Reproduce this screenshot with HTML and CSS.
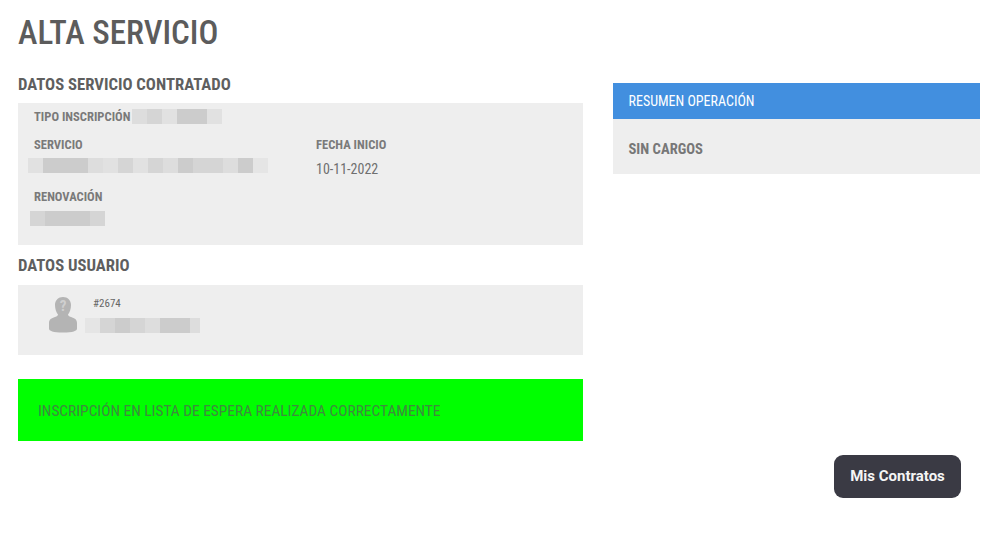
FILE: index.html
```html
<!DOCTYPE html>
<html lang="es">
  <head>
    <meta charset="UTF-8" />
    <meta name="viewport" content="width=device-width, initial-scale=1.0" />
    <title>Alta servicio</title>
    <link rel="stylesheet" href="styles.css">
  </head>
  <body>
    <h1 class="pageTitle">ALTA SERVICIO</h1>

    <div class="columns">
      <div class="leftCol">
        <h2 class="sectionTitle">DATOS SERVICIO CONTRATADO</h2>
        <div class="panel servicePanel">
          <div class="typeRow">
            <span class="label">TIPO INSCRIPCIÓN</span>
            <div class="blurred">
              <i class="s3"></i><i class="s2"></i><i class="s4"></i><i class="s1"></i><i class="s1"></i><i class="s4"></i>
            </div>
          </div>
          <div class="serviceGrid">
            <div class="serviceCell">
              <div class="label">SERVICIO</div>
              <div class="blurred blurService">
                <i class="s4"></i><i class="s1"></i><i class="s1"></i><i class="s1"></i><i class="s3"></i><i class="s4"></i><i class="s2"></i><i class="s4"></i><i class="s2"></i><i class="s3"></i><i class="s1"></i><i class="s2"></i><i class="s2"></i><i class="s3"></i><i class="s1"></i><i class="s5"></i>
              </div>
            </div>
            <div class="dateCell">
              <div class="label">FECHA INICIO</div>
              <div class="value">10-11-2022</div>
            </div>
          </div>
          <div class="label renewLabel">RENOVACIÓN</div>
          <div class="blurred blurRenew">
            <i class="s2"></i><i class="s1"></i><i class="s1"></i><i class="s1"></i><i class="s2"></i>
          </div>
        </div>

        <h2 class="sectionTitle userTitle">DATOS USUARIO</h2>
        <div class="panel userPanel">
          <svg class="avatar" viewBox="0 0 28 36" width="28" height="36">
            <path d="M14 0c4.700 0 8 3.300 8 8 0 3.800-1.300 7.500-3 9.500.2 1.300 1 1.800 3 2.500 3.500 1.100 6 2.500 6 6v5.500c0 2.500-4 4-14 4S0 34 0 31.500V26c0-3.500 2.500-4.900 6-6 2-.7 2.800-1.200 3-2.500C7.300 15.500 6 11.800 6 8c0-4.700 3.300-8 8-8z" fill="#b4b4b4"/>
            <text x="14" y="14" text-anchor="middle" class="avatarMark">?</text>
          </svg>
          <div class="userInfo">
            <div class="userId">#2674</div>
            <div class="blurred">
              <i class="s5"></i><i class="s2"></i><i class="s1"></i><i class="s2"></i><i class="s3"></i><i class="s1"></i><i class="s1"></i><i class="s3 narrow"></i>
            </div>
          </div>
        </div>

        <div class="successMsg">INSCRIPCIÓN EN LISTA DE ESPERA REALIZADA CORRECTAMENTE</div>
      </div>

      <div class="rightCol">
        <div class="summaryHead">RESUMEN OPERACIÓN</div>
        <div class="summaryBody">SIN CARGOS</div>
      </div>
    </div>

    <div class="actions">
      <a class="mainBtn" href="#">Mis Contratos</a>
    </div>
  </body>
</html>
```

FILE: styles.css
```css
body {
  font-family: Roboto, Arial, sans-serif;
  font-stretch: 75%;
  color: #5f5f5f;
  margin: 0;
  padding: 0 27px 0 18px;
}

.pageTitle {
  font-size: 33px;
  font-weight: 500;
  line-height: 38px;
  margin: 0;
  padding-top: 14px;
  color: #5c5c5c;
}

.columns {
  display: flex;
  gap: 30px;
  align-items: flex-start;
}

.leftCol {
  width: 565px;
}

.rightCol {
  width: 367px;
  margin-top: 31px;
}

.sectionTitle {
  font-size: 16.700px;
  font-weight: 700;
  line-height: 20px;
  margin: 23px 0 8px;
  color: #5f5f5f;
}

.userTitle {
  margin: 11px 0 9px;
}

.panel {
  background-color: #eeeeee;
}

.servicePanel {
  height: 142px;
  padding: 0 16px;
  box-sizing: border-box;
}

.label {
  font-size: 12.600px;
  font-weight: 700;
  line-height: 14px;
  color: #7a7a7a;
}

.typeRow {
  display: flex;
  align-items: center;
  gap: 2px;
  padding-top: 6px;
}

.blurred {
  display: flex;
}

.blurred i {
  display: block;
  width: 15px;
  height: 15px;
}

.blurred i.narrow {
  width: 10px;
}

.s1 { background-color: #cccccc; }
.s2 { background-color: #d5d5d5; }
.s3 { background-color: #dddddd; }
.s4 { background-color: #e1e1e1; }
.s5 { background-color: #e5e5e5; }

.serviceGrid {
  display: flex;
  margin-top: 14px;
}

.serviceCell {
  width: 282px;
}

.blurService {
  margin: 6px 0 0 -6px;
}

.value {
  font-size: 14px;
  line-height: 16px;
  margin-top: 9px;
  color: #6f6f6f;
}

.renewLabel {
  margin-top: 13px;
}

.blurRenew {
  margin: 7px 0 0 -4px;
}

.userPanel {
  height: 70px;
  display: flex;
  padding: 12px 0 0 31px;
  box-sizing: border-box;
}

.avatar {
  flex: none;
}

.avatarMark {
  font-size: 15px;
  font-weight: 700;
  fill: #cfcfcf;
}

.userInfo {
  margin-left: 8px;
}

.userId {
  font-size: 11px;
  line-height: 12px;
  margin: 1px 0 8px 8px;
  color: #666;
}

.successMsg {
  background-color: #00ff00;
  height: 62px;
  line-height: 64px;
  margin-top: 24px;
  padding-left: 20px;
  font-size: 15.400px;
  color: #3f8a3f;
}

.summaryHead {
  background-color: #428fdf;
  color: #fff;
  height: 36px;
  line-height: 37px;
  padding-left: 15.500px;
  font-size: 14px;
}

.summaryBody {
  background-color: #eeeeee;
  height: 55px;
  line-height: 61px;
  padding-left: 15.500px;
  font-size: 14.600px;
  font-weight: 700;
  color: #777;
}

.actions {
  display: flex;
  justify-content: flex-end;
  margin-top: 14px;
  padding-right: 19px;
}

.mainBtn {
  background-color: #3a3a44;
  color: #f5f5f5;
  width: 127px;
  height: 43px;
  line-height: 43px;
  text-align: center;
  border-radius: 9px;
  font-size: 15px;
  font-stretch: 100%;
  font-weight: 700;
  text-decoration: none;
}
```
